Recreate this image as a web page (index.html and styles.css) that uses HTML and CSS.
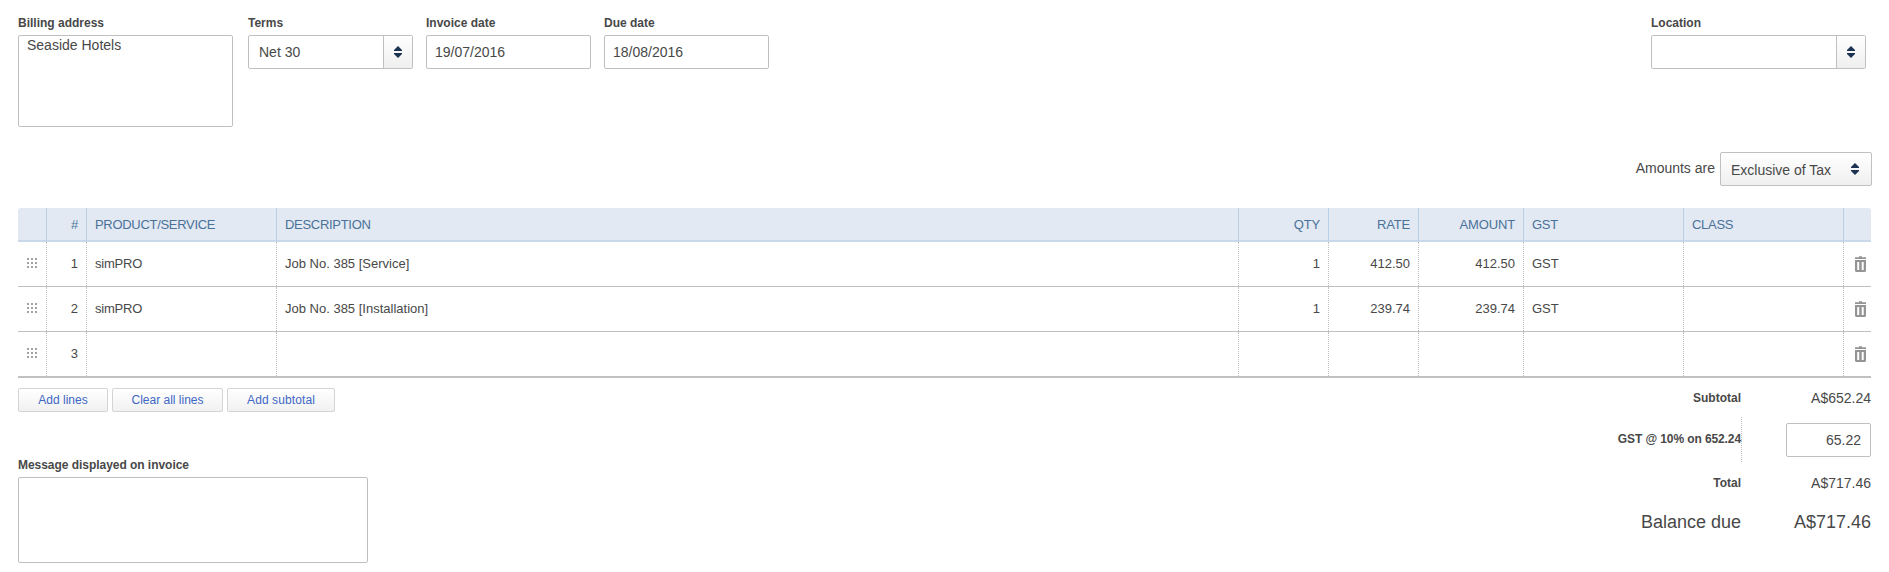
FILE: index.html
```html
<!DOCTYPE html>
<html lang="en">
<head>
<meta charset="utf-8">
<title>Invoice</title>
<link rel="stylesheet" href="styles.css">
</head>
<body>
<svg class="defs" width="0" height="0" aria-hidden="true">
  <symbol id="sort" viewBox="0 0 8 12"><path d="M4 0 8 4V5H0V4ZM0 7H8V8L4 12 0 8Z" fill="#1b3350"/></symbol>
  <symbol id="grip" viewBox="0 0 10 10"><path d="M0 0h2v2H0zM4 0h2v2H4zM8 0h2v2H8zM0 4h2v2H0zM4 4h2v2H4zM8 4h2v2H8zM0 8h2v2H0zM4 8h2v2H4zM8 8h2v2H8z" fill="#a3a3a3"/></symbol>
  <symbol id="trash" viewBox="0 0 11 16"><path fill-rule="evenodd" d="M4 0.3h3v0.9h4v1.8H0V1.2h4zM0 4h11v11l-1 1H1l-1-1zM2.2 6v8h2V6zM6.7 6v8h2V6z" fill="#949494"/></symbol>
</svg>
<main class="invoice">
  <section class="fields">
    <div class="field billing"><label>Billing address</label><div class="box address">Seaside Hotels</div></div>
    <div class="field terms"><label>Terms</label><div class="box combo"><span class="value">Net 30</span><span class="toggle"><svg class="sort"><use href="#sort"/></svg></span></div></div>
    <div class="field date"><label>Invoice date</label><div class="box input">19/07/2016</div></div>
    <div class="field date"><label>Due date</label><div class="box input">18/08/2016</div></div>
    <div class="field location"><label>Location</label><div class="box combo"><span class="value"></span><span class="toggle"><svg class="sort"><use href="#sort"/></svg></span></div></div>
  </section>
  <section class="tax-mode">
    <span class="tax-label">Amounts are</span>
    <div class="box select"><span>Exclusive of Tax</span><svg class="sort"><use href="#sort"/></svg></div>
  </section>
  <section class="lines">
    <div class="row head">
      <div class="cell"></div><div class="cell num">#</div><div class="cell">PRODUCT/SERVICE</div><div class="cell">DESCRIPTION</div><div class="cell num">QTY</div><div class="cell num">RATE</div><div class="cell num">AMOUNT</div><div class="cell">GST</div><div class="cell">CLASS</div><div class="cell"></div>
    </div>
    <div class="row">
      <div class="cell icon"><svg class="grip"><use href="#grip"/></svg></div><div class="cell num">1</div><div class="cell item">simPRO</div><div class="cell">Job No. 385 [Service]</div><div class="cell num">1</div><div class="cell num">412.50</div><div class="cell num">412.50</div><div class="cell">GST</div><div class="cell"></div><div class="cell icon"><svg class="trash"><use href="#trash"/></svg></div>
    </div>
    <div class="row">
      <div class="cell icon"><svg class="grip"><use href="#grip"/></svg></div><div class="cell num">2</div><div class="cell item">simPRO</div><div class="cell">Job No. 385 [Installation]</div><div class="cell num">1</div><div class="cell num">239.74</div><div class="cell num">239.74</div><div class="cell">GST</div><div class="cell"></div><div class="cell icon"><svg class="trash"><use href="#trash"/></svg></div>
    </div>
    <div class="row last">
      <div class="cell icon"><svg class="grip"><use href="#grip"/></svg></div><div class="cell num">3</div><div class="cell"></div><div class="cell"></div><div class="cell"></div><div class="cell"></div><div class="cell"></div><div class="cell"></div><div class="cell"></div><div class="cell icon"><svg class="trash"><use href="#trash"/></svg></div>
    </div>
  </section>
  <section class="footer">
    <div class="left">
      <div class="actions">
        <button class="btn add-lines">Add lines</button>
        <button class="btn clear-lines">Clear all lines</button>
        <button class="btn add-subtotal">Add subtotal</button>
      </div>
      <label class="message-label">Message displayed on invoice</label>
      <div class="box message"></div>
    </div>
    <div class="totals">
      <div class="total subtotal"><span class="name">Subtotal</span><span class="amount">A$652.24</span></div>
      <div class="total gst"><span class="name">GST @ 10% on 652.24</span><span class="box tax-input">65.22</span></div>
      <div class="total sum"><span class="name">Total</span><span class="amount">A$717.46</span></div>
      <div class="total balance"><span>Balance due</span><span class="amount">A$717.46</span></div>
    </div>
  </section>
</main>
</body>
</html>
```
FILE: styles.css
```css
* { box-sizing: border-box; }
body {
  margin: 0;
  background: #fff;
  color: #484848;
  font: 14px/16px "Liberation Sans", Arial, sans-serif;
}
.defs { display: block; }
.invoice { width: 1889px; height: 572px; padding: 16px 17px 0 18px; overflow: hidden; }
label, .name { font-size: 12px; font-weight: bold; }
label { display: block; height: 19px; line-height: 14px; }
.box { border: 1px solid #c0c0c0; border-radius: 2px; background: #fff; }
.sort { display: block; width: 8px; height: 12px; }

.fields { display: flex; height: 136px; padding-right: 6px; }
.billing { width: 215px; margin-right: 15px; }
.address { height: 92px; padding: 1px 8px; }
.terms, .date { width: 165px; margin-right: 13px; }
.location { width: 215px; margin-left: auto; }
.combo { display: flex; height: 34px; line-height: 32px; }
.value { flex: 1; padding-left: 10px; }
.toggle {
  display: flex; align-items: center; justify-content: center;
  width: 29px;
  border-left: 1px solid #c0c0c0;
  background: linear-gradient(#fff, #efefef);
}
.input { height: 34px; line-height: 32px; padding-left: 8px; }

.tax-mode { display: flex; justify-content: flex-end; height: 56px; }
.tax-label { margin-right: 5px; line-height: 33px; }
.select {
  display: flex; justify-content: space-between; align-items: center;
  width: 152px; height: 34px; padding: 0 12px 0 10px;
  background: linear-gradient(#fff, #efefef);
}
.select span { padding-top: 2px; }

.lines { width: 1853px; font-size: 13px; }
.row {
  display: grid;
  grid-template-columns: 29px 40px 190px 962px 90px 90px 105px 160px 160px 27px;
  height: 45px;
  border-bottom: 1px solid #c0c0c0;
}
.cell { padding: 0 8px; line-height: 44px; border-right: 1px dotted #c0c0c0; white-space: nowrap; }
.cell:last-child { border-right: 0; }
.num { text-align: right; }
.item { letter-spacing: -0.2px; }
.icon { display: flex; align-items: center; padding: 0; justify-content: center; }
.grip { width: 10px; height: 10px; margin-bottom: 2px; }
.trash { width: 11px; height: 16px; margin-left: 6px; }
.head {
  height: 34px;
  background: #e2e9f3;
  border-bottom: 2px solid #c9d9e9;
  border-radius: 3px 3px 0 0;
  color: #4a7299;
  letter-spacing: -0.3px;
}
.head .cell { line-height: 33px; border-right-style: solid; border-right-color: #b9cfe6; }
.head .cell:last-child { border-right: 0; }
.head .num { letter-spacing: -0.15px; }
.last { height: 46px; border-bottom-width: 2px; }

.footer { display: flex; justify-content: space-between; padding-right: 1px; }
.left { padding-top: 10px; }
.actions { display: flex; gap: 4px; height: 70px; }
.btn {
  height: 24px; padding: 0;
  border: 1px solid #d4d4d4; border-radius: 2px;
  background: linear-gradient(#fff, #f1f1f1);
  color: #4067c4;
  font: 12px/22px "Liberation Sans", Arial, sans-serif;
}
.add-lines { width: 90px; }
.clear-lines { width: 111px; }
.add-subtotal { width: 108px; letter-spacing: 0.1px; }
.message-label { letter-spacing: -0.04px; }
.message { width: 350px; height: 86px; }

.totals { width: 300px; }
.total { display: flex; justify-content: space-between; align-items: center; }
.total > :first-child { width: 170px; text-align: right; }
.subtotal { height: 39px; }
.gst { height: 45px; }
.total.gst > .name { width: 171px; height: 45px; line-height: 44px; border-right: 1px dotted #c0c0c0; letter-spacing: -0.1px; }
.tax-input { width: 85px; height: 34px; line-height: 32px; padding-right: 9px; text-align: right; }
.sum { height: 42px; }
.balance { height: 36px; font-size: 18px; line-height: 20px; }
```
